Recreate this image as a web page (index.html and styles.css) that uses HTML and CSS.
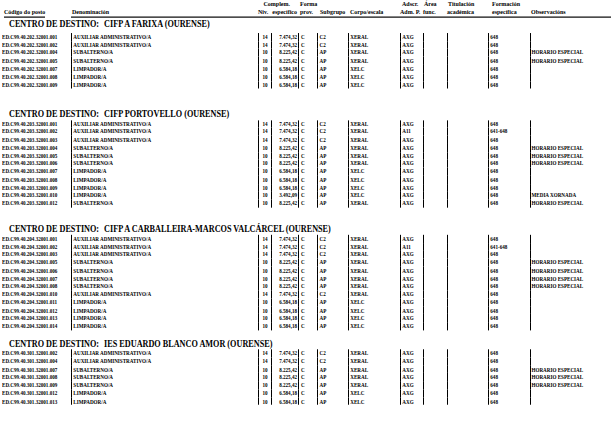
FILE: index.html
```html
<!DOCTYPE html>
<html lang="gl">
<head>
<meta charset="utf-8">
<title>Centros de destino</title>
<link rel="stylesheet" href="styles.css">
</head>
<body>
<div class="page">
  <div class="head">
    <span class="h1c"><u>Código do posto</u></span>
    <span class="h2c">Denominación</span>
    <span class="h3c">Niv.</span>
    <span class="h4c"><b class="top">Complem.</b><b>específico</b></span>
    <span class="h5c"><b>Forma</b><b>prov.</b></span>
    <span class="h6c">Subgrupo</span>
    <span class="h7c">Corpo/escala</span>
    <span class="h8c"><b class="ind">Adscr.</b><b>Adm. P.</b></span>
    <span class="h9c"><b class="ind">Área</b><b>func.</b></span>
    <span class="h10c"><b class="ind">Titulación</b><b>académica</b></span>
    <span class="h11c"><b>Formación</b><b>específica</b></span>
    <span class="h12c">Observacións</span>
  </div>

  <div class="title t1"><span>CENTRO DE DESTINO:</span><span class="name">CIFP A FARIXA (OURENSE)</span></div>
  <div class="rows r1">
    <div class="row"><span>ED.C99.40.202.32001.001</span><span>AUXILIAR ADMINISTRATIVO/A</span><span>14</span><span>7.474,32</span><span>C</span><span>C2</span><span>XERAL</span><span>AXG</span><span></span><span></span><span>648</span><span></span></div>
    <div class="row"><span>ED.C99.40.202.32001.002</span><span>AUXILIAR ADMINISTRATIVO/A</span><span>14</span><span>7.474,32</span><span>C</span><span>C2</span><span>XERAL</span><span>AXG</span><span></span><span></span><span>648</span><span></span></div>
    <div class="row"><span>ED.C99.40.202.32001.004</span><span>SUBALTERNO/A</span><span>10</span><span>8.225,42</span><span>C</span><span>AP</span><span>XERAL</span><span>AXG</span><span></span><span></span><span>648</span><span>HORARIO ESPECIAL</span></div>
    <div class="row"><span>ED.C99.40.202.32001.005</span><span>SUBALTERNO/A</span><span>10</span><span>8.225,42</span><span>C</span><span>AP</span><span>XERAL</span><span>AXG</span><span></span><span></span><span>648</span><span>HORARIO ESPECIAL</span></div>
    <div class="row"><span>ED.C99.40.202.32001.007</span><span>LIMPADOR/A</span><span>10</span><span>6.584,18</span><span>C</span><span>AP</span><span>XELC</span><span>AXG</span><span></span><span></span><span>648</span><span></span></div>
    <div class="row"><span>ED.C99.40.202.32001.008</span><span>LIMPADOR/A</span><span>10</span><span>6.584,18</span><span>C</span><span>AP</span><span>XELC</span><span>AXG</span><span></span><span></span><span>648</span><span></span></div>
    <div class="row"><span>ED.C99.40.202.32001.009</span><span>LIMPADOR/A</span><span>10</span><span>6.584,18</span><span>C</span><span>AP</span><span>XELC</span><span>AXG</span><span></span><span></span><span>648</span><span></span></div>
  </div>

  <div class="title t2"><span>CENTRO DE DESTINO:</span><span class="name">CIFP PORTOVELLO (OURENSE)</span></div>
  <div class="rows r2">
    <div class="row"><span>ED.C99.40.203.32001.001</span><span>AUXILIAR ADMINISTRATIVO/A</span><span>14</span><span>7.474,32</span><span>C</span><span>C2</span><span>XERAL</span><span>AXG</span><span></span><span></span><span>648</span><span></span></div>
    <div class="row"><span>ED.C99.40.203.32001.002</span><span>AUXILIAR ADMINISTRATIVO/A</span><span>14</span><span>7.474,32</span><span>C</span><span>C2</span><span>XERAL</span><span>A11</span><span></span><span></span><span>641-648</span><span></span></div>
    <div class="row"><span>ED.C99.40.203.32001.003</span><span>AUXILIAR ADMINISTRATIVO/A</span><span>14</span><span>7.474,32</span><span>C</span><span>C2</span><span>XERAL</span><span>AXG</span><span></span><span></span><span>648</span><span></span></div>
    <div class="row"><span>ED.C99.40.203.32001.004</span><span>SUBALTERNO/A</span><span>10</span><span>8.225,42</span><span>C</span><span>AP</span><span>XERAL</span><span>AXG</span><span></span><span></span><span>648</span><span>HORARIO ESPECIAL</span></div>
    <div class="row"><span>ED.C99.40.203.32001.005</span><span>SUBALTERNO/A</span><span>10</span><span>8.225,42</span><span>C</span><span>AP</span><span>XERAL</span><span>AXG</span><span></span><span></span><span>648</span><span>HORARIO ESPECIAL</span></div>
    <div class="row"><span>ED.C99.40.203.32001.006</span><span>SUBALTERNO/A</span><span>10</span><span>8.225,42</span><span>C</span><span>AP</span><span>XERAL</span><span>AXG</span><span></span><span></span><span>648</span><span>HORARIO ESPECIAL</span></div>
    <div class="row"><span>ED.C99.40.203.32001.007</span><span>LIMPADOR/A</span><span>10</span><span>6.584,18</span><span>C</span><span>AP</span><span>XELC</span><span>AXG</span><span></span><span></span><span>648</span><span></span></div>
    <div class="row"><span>ED.C99.40.203.32001.008</span><span>LIMPADOR/A</span><span>10</span><span>6.584,18</span><span>C</span><span>AP</span><span>XELC</span><span>AXG</span><span></span><span></span><span>648</span><span></span></div>
    <div class="row"><span>ED.C99.40.203.32001.009</span><span>LIMPADOR/A</span><span>10</span><span>6.584,18</span><span>C</span><span>AP</span><span>XELC</span><span>AXG</span><span></span><span></span><span>648</span><span></span></div>
    <div class="row"><span>ED.C99.40.203.32001.010</span><span>LIMPADOR/A</span><span>10</span><span>3.492,09</span><span>C</span><span>AP</span><span>XELC</span><span>AXG</span><span></span><span></span><span>648</span><span>MEDIA XORNADA</span></div>
    <div class="row"><span>ED.C99.40.203.32001.012</span><span>SUBALTERNO/A</span><span>10</span><span>8.225,42</span><span>C</span><span>AP</span><span>XERAL</span><span>AXG</span><span></span><span></span><span>648</span><span>HORARIO ESPECIAL</span></div>
  </div>

  <div class="title t3"><span>CENTRO DE DESTINO:</span><span class="name">CIFP A CARBALLEIRA-MARCOS VALCÁRCEL (OURENSE)</span></div>
  <div class="rows r3">
    <div class="row"><span>ED.C99.40.204.32001.001</span><span>AUXILIAR ADMINISTRATIVO/A</span><span>14</span><span>7.474,32</span><span>C</span><span>C2</span><span>XERAL</span><span>AXG</span><span></span><span></span><span>648</span><span></span></div>
    <div class="row"><span>ED.C99.40.204.32001.002</span><span>AUXILIAR ADMINISTRATIVO/A</span><span>14</span><span>7.474,32</span><span>C</span><span>C2</span><span>XERAL</span><span>A11</span><span></span><span></span><span>641-648</span><span></span></div>
    <div class="row"><span>ED.C99.40.204.32001.003</span><span>AUXILIAR ADMINISTRATIVO/A</span><span>14</span><span>7.474,32</span><span>C</span><span>C2</span><span>XERAL</span><span>AXG</span><span></span><span></span><span>648</span><span></span></div>
    <div class="row"><span>ED.C99.40.204.32001.005</span><span>SUBALTERNO/A</span><span>10</span><span>8.225,42</span><span>C</span><span>AP</span><span>XERAL</span><span>AXG</span><span></span><span></span><span>648</span><span>HORARIO ESPECIAL</span></div>
    <div class="row"><span>ED.C99.40.204.32001.006</span><span>SUBALTERNO/A</span><span>10</span><span>8.225,42</span><span>C</span><span>AP</span><span>XERAL</span><span>AXG</span><span></span><span></span><span>648</span><span>HORARIO ESPECIAL</span></div>
    <div class="row"><span>ED.C99.40.204.32001.007</span><span>SUBALTERNO/A</span><span>10</span><span>8.225,42</span><span>C</span><span>AP</span><span>XERAL</span><span>AXG</span><span></span><span></span><span>648</span><span>HORARIO ESPECIAL</span></div>
    <div class="row"><span>ED.C99.40.204.32001.008</span><span>SUBALTERNO/A</span><span>10</span><span>8.225,42</span><span>C</span><span>AP</span><span>XERAL</span><span>AXG</span><span></span><span></span><span>648</span><span>HORARIO ESPECIAL</span></div>
    <div class="row"><span>ED.C99.40.204.32001.010</span><span>AUXILIAR ADMINISTRATIVO/A</span><span>14</span><span>7.474,32</span><span>C</span><span>C2</span><span>XERAL</span><span>AXG</span><span></span><span></span><span>648</span><span></span></div>
    <div class="row"><span>ED.C99.40.204.32001.011</span><span>LIMPADOR/A</span><span>10</span><span>6.584,18</span><span>C</span><span>AP</span><span>XELC</span><span>AXG</span><span></span><span></span><span>648</span><span></span></div>
    <div class="row"><span>ED.C99.40.204.32001.012</span><span>LIMPADOR/A</span><span>10</span><span>6.584,18</span><span>C</span><span>AP</span><span>XELC</span><span>AXG</span><span></span><span></span><span>648</span><span></span></div>
    <div class="row"><span>ED.C99.40.204.32001.013</span><span>LIMPADOR/A</span><span>10</span><span>6.584,18</span><span>C</span><span>AP</span><span>XELC</span><span>AXG</span><span></span><span></span><span>648</span><span></span></div>
    <div class="row"><span>ED.C99.40.204.32001.014</span><span>LIMPADOR/A</span><span>10</span><span>6.584,18</span><span>C</span><span>AP</span><span>XELC</span><span>AXG</span><span></span><span></span><span>648</span><span></span></div>
  </div>

  <div class="title t4"><span>CENTRO DE DESTINO:</span><span class="name">IES EDUARDO BLANCO AMOR (OURENSE)</span></div>
  <div class="rows r4">
    <div class="row"><span>ED.C99.40.301.32001.002</span><span>AUXILIAR ADMINISTRATIVO/A</span><span>14</span><span>7.474,32</span><span>C</span><span>C2</span><span>XERAL</span><span>AXG</span><span></span><span></span><span>648</span><span></span></div>
    <div class="row"><span>ED.C99.40.301.32001.004</span><span>AUXILIAR ADMINISTRATIVO/A</span><span>14</span><span>7.474,32</span><span>C</span><span>C2</span><span>XERAL</span><span>AXG</span><span></span><span></span><span>648</span><span></span></div>
    <div class="row"><span>ED.C99.40.301.32001.007</span><span>SUBALTERNO/A</span><span>10</span><span>8.225,42</span><span>C</span><span>AP</span><span>XERAL</span><span>AXG</span><span></span><span></span><span>648</span><span>HORARIO ESPECIAL</span></div>
    <div class="row"><span>ED.C99.40.301.32001.008</span><span>SUBALTERNO/A</span><span>10</span><span>8.225,42</span><span>C</span><span>AP</span><span>XERAL</span><span>AXG</span><span></span><span></span><span>648</span><span>HORARIO ESPECIAL</span></div>
    <div class="row"><span>ED.C99.40.301.32001.009</span><span>SUBALTERNO/A</span><span>10</span><span>8.225,42</span><span>C</span><span>AP</span><span>XERAL</span><span>AXG</span><span></span><span></span><span>648</span><span>HORARIO ESPECIAL</span></div>
    <div class="row"><span>ED.C99.40.301.32001.012</span><span>LIMPADOR/A</span><span>10</span><span>6.584,18</span><span>C</span><span>AP</span><span>XELC</span><span>AXG</span><span></span><span></span><span>648</span><span></span></div>
    <div class="row"><span>ED.C99.40.301.32001.013</span><span>LIMPADOR/A</span><span>10</span><span>6.584,18</span><span>C</span><span>AP</span><span>XELC</span><span>AXG</span><span></span><span></span><span>648</span><span></span></div>
  </div>
</div>
</body>
</html>
```

FILE: styles.css
```css
:root {
  --s: 1.18;
  --cols: 69px 187px 13px 27px 19px 31px 52px 23px 24px 41px 42px 81px;
}

html, body {
  margin: 0;
  padding: 0;
  background: #fff;
}
body { min-height: 439px; }

.page {
  width: 609px;
  padding-left: 2px;
  transform: scaleY(var(--s));
  transform-origin: 0 0;
  font-family: "Liberation Serif", "Times New Roman", serif;
  font-weight: bold;
  color: #000;
}

/* header */
.head {
  display: grid;
  grid-template-columns: var(--cols);
  height: calc(16px / var(--s));
  font-size: 6px;
  line-height: calc(8px / var(--s));
}
.head > span {
  display: flex;
  flex-direction: column;
  justify-content: flex-end;
  white-space: nowrap;
  border-bottom: 1px solid #000;
}
.head > span b { font-weight: bold; }
.head .h1c { border-bottom: none; padding-left: 2px; }
.head .h1c u { text-decoration: none; border-bottom: 1px solid #000; align-self: flex-start; }
.head .h2c { padding-left: 1px; }
.head .h4c { align-items: flex-end; padding-right: 1px; }
.head .h4c .top { margin-right: 7px; }
.head .h5c { padding-left: 2px; }
.head .h6c { padding-left: 3px; }
.head .h7c { padding-left: 2px; }
.head .h8c .ind { padding-left: 2px; }
.head .h9c .ind { padding-left: 1px; }
.head .h10c .ind { padding-left: 1px; }
.head .h11c { padding-left: 4px; }
.head .h12c { padding-left: 1px; }

/* section titles */
.title {
  height: calc(10px / var(--s));
  line-height: calc(14px / var(--s));
  font-size: 8.2px;
  padding-left: 7px;
  white-space: nowrap;
}
.title .name { margin-left: 5px; }
.t1 { margin-top: calc(3px / var(--s)); line-height: calc(12px / var(--s)); }
.t2 { margin-top: calc(19px / var(--s)); }
.t3 { margin-top: calc(15px / var(--s)); }
.t4 { margin-top: calc(7px / var(--s)); }

.rows { margin-top: calc(2px / var(--s)); }
.r1 { margin-top: calc(4px / var(--s)); }

.row {
  display: grid;
  grid-template-columns: var(--cols);
  height: calc(8px / var(--s));
  font-size: 5.1px;
  line-height: calc(8px / var(--s));
}
.row > span {
  border-left: 1px solid #000;
  white-space: nowrap;
  overflow: hidden;
  padding-left: 1.3px;
}
.row > span:first-child { border-left: none; padding-left: 0; }
.row > span:nth-child(3) { text-align: center; padding-left: 0; }
.row > span:nth-child(4) { text-align: right; padding-left: 0; padding-right: 1px; }
.row > span:nth-child(5) { padding-left: 2px; }
.row > span:nth-child(6) { padding-left: 1.5px; }
.row > span:nth-child(12) { padding-left: 0.5px; }
```
